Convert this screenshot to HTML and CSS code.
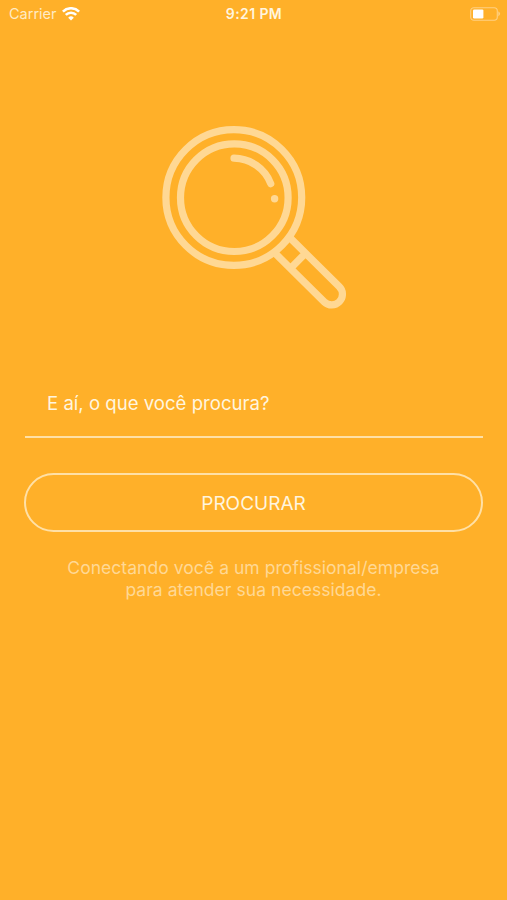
FILE: index.html
```
<!DOCTYPE html>
<html lang="pt-BR">
<head>
<meta charset="utf-8">
<meta name="viewport" content="width=device-width, initial-scale=1">
<title>Procurar</title>
<link rel="stylesheet" href="styles.css">
</head>
<body>
<header class="status">
  <div class="status-left"><span class="carrier">Carrier</span>
    <svg class="wifi" width="18" height="14" viewBox="0 0 18 14" fill="none" stroke="currentColor" stroke-width="2.6"><path d="M.9 4.6a11.5 11.5 0 0 1 16.2 0M3.8 7.9a7.4 7.4 0 0 1 10.4 0"/><path d="M9 13.5 6.2 10.7a4 4 0 0 1 5.6 0Z" fill="currentColor" stroke="none"/></svg>
  </div>
  <time class="clock">9:21 PM</time>
  <div class="status-right">
    <svg width="31" height="14" viewBox="0 0 31 14"><rect x=".7" y=".7" width="26.6" height="12.6" rx="3.2" fill="none" stroke="#ffd082" stroke-width="1.1"/><rect x="3" y="2.4" width="10.4" height="9" rx="1.2" fill="#fff"/><path d="M28.3 4.2q3.6 2.6 0 5.2Z" fill="#ffd082"/></svg>
  </div>
</header>
<main class="search">
  <svg class="lens" width="184" height="183" viewBox="0 -.5 184 183" fill="none" stroke="currentColor" stroke-width="7.2" stroke-linecap="round">
    <circle cx="71.8" cy="71" r="67.9"/>
    <circle cx="72.3" cy="71.2" r="53.8"/>
    <path d="M72 31.7a40 40 0 0 1 36.8 25.5"/>
    <circle cx="112.6" cy="72.2" r="3.7" fill="currentColor" stroke="none"/>
    <path transform="translate(72 71) rotate(44.7)" stroke-linecap="butt" d="M69-10.7H137.5a10.7 10.7 0 0 1 0 21.4H69M90-10.7V10.7"/>
  </svg>
  <div class="field">E aí, o que você procura?</div>
  <button class="submit" type="button">PROCURAR</button>
  <p class="hint">Conectando você a um profissional/empresa<br>para atender sua necessidade.</p>
</main>
</body>
</html>
```
FILE: styles.css
```
* { box-sizing: border-box; }
body {
  margin: 0;
  min-height: 900px;
  background: #ffb029;
  color: #fff5df;
  font-family: Inter, "Liberation Sans", sans-serif;
}
.status {
  display: grid;
  grid-template-columns: 1fr auto 1fr;
  align-items: center;
  height: 27px;
  padding: 0 6px 0 9px;
  font-size: 14.5px;
}
.status-left { display: flex; align-items: center; gap: 5px; }
.carrier { color: #ffebc4; }
.wifi { color: #fff; }
.clock { margin-right: 2px; font-size: 14px; font-weight: 600; letter-spacing: .4px; }
.status-right { display: flex; justify-content: flex-end; }
.search {
  display: flex;
  flex-direction: column;
  padding: 99px 24px 0;
}
.lens { align-self: center; color: #ffd894; }
.field {
  height: 67px;
  margin: 62px 0 0 1px;
  padding: 0 22px;
  border-bottom: 2px solid #ffe0a6;
  font-size: 18.6px;
  line-height: 64px;
}
.submit {
  height: 59px;
  margin-top: 35px;
  padding-top: 2px;
  border: 2px solid #ffe0a6;
  border-radius: 30px;
  background: none;
  color: inherit;
  font: 19px/1 Inter, "Liberation Sans", sans-serif;
}
.hint {
  margin: 25px 0 0;
  color: #ffd894;
  font-size: 17.5px;
  line-height: 22px;
  letter-spacing: .05px;
  text-align: center;
}
```
